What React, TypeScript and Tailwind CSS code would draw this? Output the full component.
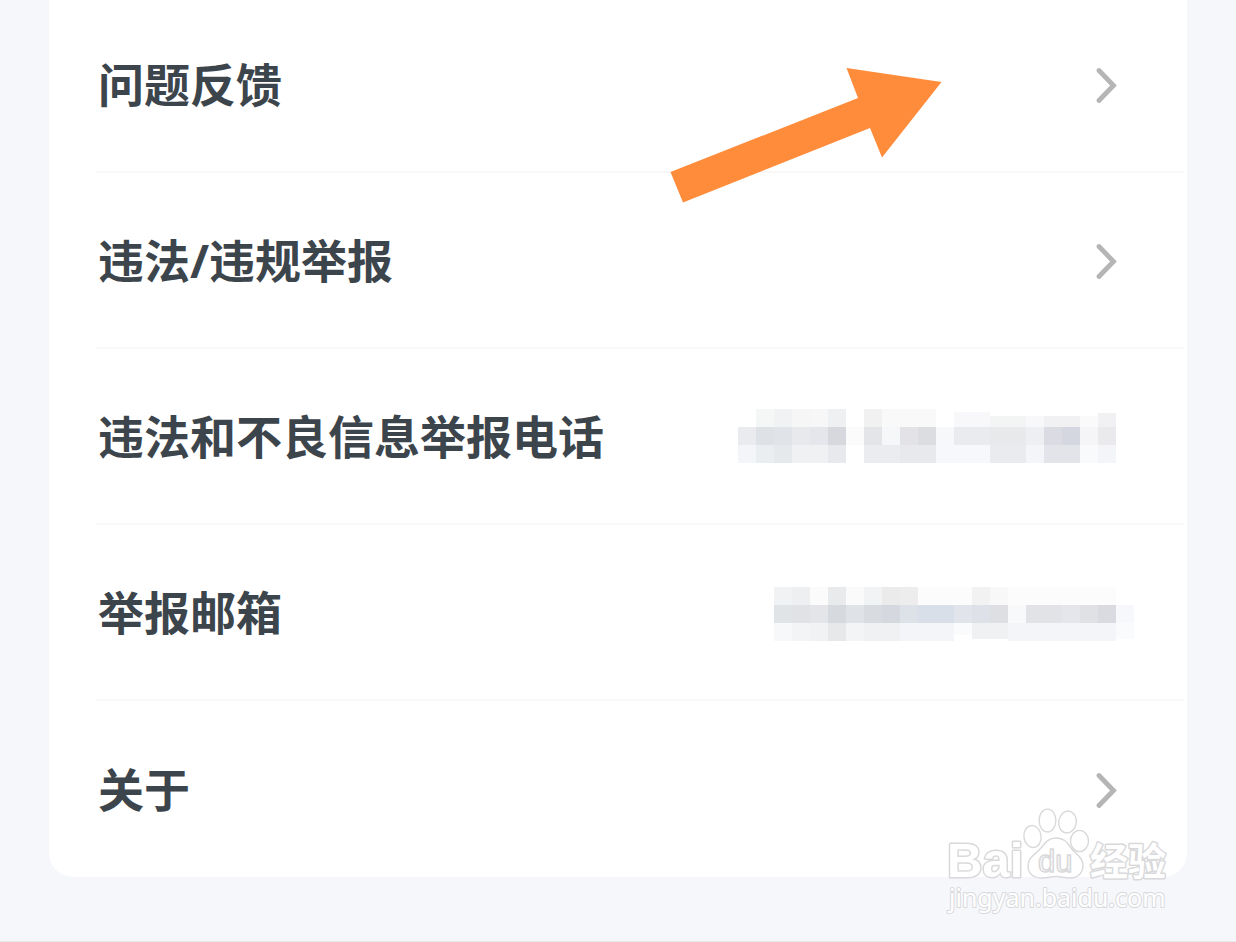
import React from 'react';

type Block = [x: number, y: number, w: number, h: number, fill: string];

const phoneBlocks: Block[] = [
  [18, 0, 18, 18, '#f5f6f6'],
  [36, 0, 18, 18, '#f1f2f3'],
  [54, 0, 18, 18, '#f6f6f7'],
  [72, 0, 18, 18, '#f7f7f8'],
  [90, 0, 18, 18, '#eff0f2'],
  [126, 0, 18, 18, '#f1f1f2'],
  [144, 0, 54, 18, '#f9f9fa'],
  [216, 3, 36, 15, '#f8f8fa'],
  [252, 7, 36, 11, '#f3f4f4'],
  [288, 7, 18, 11, '#f8f8fa'],
  [306, 7, 36, 11, '#f1f1f3'],
  [342, 7, 18, 11, '#fafafb'],
  [360, 4, 18, 14, '#f1f1f3'],
  [0, 18, 18, 18, '#eaebee'],
  [18, 18, 18, 18, '#dee2e6'],
  [36, 18, 18, 18, '#e0e3e7'],
  [54, 18, 18, 18, '#e7e9ed'],
  [72, 18, 18, 18, '#e5e6eb'],
  [90, 18, 18, 18, '#d7d8de'],
  [108, 18, 18, 18, '#fbfbfc'],
  [126, 18, 18, 18, '#e4e5e8'],
  [144, 18, 18, 18, '#f6f7f9'],
  [162, 18, 18, 18, '#e3e3e7'],
  [180, 18, 18, 18, '#dcdde1'],
  [198, 18, 18, 18, '#f7f8fa'],
  [216, 18, 36, 18, '#eaebef'],
  [252, 18, 36, 18, '#e8e9eb'],
  [288, 18, 18, 18, '#eeeff3'],
  [306, 18, 18, 18, '#dbdce3'],
  [324, 18, 18, 18, '#d5d7e0'],
  [342, 18, 18, 18, '#f5f5f7'],
  [360, 18, 18, 18, '#eaeaed'],
  [0, 36, 18, 18, '#f4f5f8'],
  [18, 36, 18, 18, '#eaeef1'],
  [36, 36, 18, 18, '#e5e9ec'],
  [54, 36, 36, 18, '#f0f1f3'],
  [90, 36, 18, 18, '#e8e9ec'],
  [126, 36, 36, 18, '#ebecef'],
  [162, 36, 36, 18, '#e8e9ed'],
  [198, 36, 54, 18, '#f7f8fb'],
  [252, 36, 36, 18, '#eaebee'],
  [288, 36, 18, 18, '#f4f5f9'],
  [306, 36, 36, 18, '#e3e4e9'],
  [342, 36, 18, 18, '#f9fafc'],
  [360, 36, 18, 18, '#f4f5f8'],
];

const emailBlocks: Block[] = [
  [0, 0, 18, 18, '#f1f2f3'],
  [18, 0, 18, 18, '#eeeff0'],
  [36, 0, 18, 18, '#fbfbfb'],
  [54, 0, 18, 18, '#e9eaeb'],
  [72, 0, 18, 18, '#fafafa'],
  [90, 0, 18, 18, '#f2f3f4'],
  [108, 0, 18, 18, '#ebebec'],
  [126, 0, 18, 18, '#ededee'],
  [144, 0, 54, 18, '#fcfcfc'],
  [198, 0, 18, 18, '#f2f2f2'],
  [216, 0, 18, 18, '#f8f8f8'],
  [234, 0, 108, 18, '#fcfcfc'],
  [0, 18, 18, 18, '#e1e4e7'],
  [18, 18, 18, 18, '#e0e2e6'],
  [36, 18, 18, 18, '#e3e5e9'],
  [54, 18, 18, 18, '#d6dade'],
  [72, 18, 18, 18, '#dfe2e6'],
  [90, 18, 18, 18, '#d8dce0'],
  [108, 18, 18, 18, '#d5d9df'],
  [126, 18, 18, 18, '#dde1e8'],
  [144, 18, 36, 18, '#d9dfe8'],
  [180, 18, 18, 18, '#e1e4eb'],
  [198, 18, 18, 18, '#dfe1e8'],
  [216, 18, 18, 18, '#dddfe2'],
  [234, 18, 18, 18, '#f8f9fa'],
  [252, 18, 36, 18, '#e2e3e6'],
  [288, 18, 18, 18, '#e4e6ec'],
  [306, 18, 18, 18, '#dfe1e5'],
  [324, 18, 18, 18, '#d9dbe0'],
  [342, 18, 18, 18, '#f7f8fb'],
  [0, 36, 18, 18, '#f7f8fa'],
  [18, 36, 18, 18, '#f3f4f6'],
  [36, 36, 18, 18, '#f1f2f3'],
  [54, 36, 18, 18, '#e6e8ea'],
  [72, 36, 18, 18, '#f3f4f6'],
  [90, 36, 36, 18, '#f0f1f3'],
  [126, 36, 54, 18, '#f4f5f8'],
  [180, 36, 18, 12, '#fafbfc'],
  [198, 36, 36, 16, '#eff1f3'],
  [234, 36, 108, 18, '#f4f5f8'],
  [342, 36, 18, 16, '#fafbfd'],
];

const Mosaic: React.FC<{ blocks: Block[]; width: number; className: string }> = ({
  blocks,
  width,
  className,
}) => (
  <svg
    width={width}
    height={54}
    viewBox={`0 0 ${width} 54`}
    shapeRendering="crispEdges"
    className={`shrink-0 ${className}`}
    aria-hidden="true"
  >
    {blocks.map(([x, y, w, h, fill]) => (
      <rect key={`${x}-${y}`} x={x} y={y} width={w} height={h} fill={fill} />
    ))}
  </svg>
);

const Chevron: React.FC = () => (
  <svg width="24" height="38" viewBox="0 0 24 38" fill="none" className="mr-16 shrink-0" aria-hidden="true">
    <path d="M3 3.500 L17.500 18.500 L3 33.500" stroke="#b5b5b5" strokeWidth="4.8" strokeLinecap="round" strokeLinejoin="miter" />
  </svg>
);

const rowClass = 'flex w-full items-center justify-between pl-[2px] text-left';

const LinkRow: React.FC<{ label: string; className: string }> = ({ label, className }) => (
  <a href="#" className={`${rowClass} ${className}`}>
    <span className="pb-1">{label}</span>
    <Chevron />
  </a>
);

const InfoRow: React.FC<{ label: string; children: React.ReactNode }> = ({ label, children }) => (
  <div className={`${rowClass} h-44 border-b-2 border-[#f7f7f8] pt-1`}>
    <span className="pb-1">{label}</span>
    {children}
  </div>
);

const Arrow: React.FC = () => (
  <svg
    width="272"
    height="136"
    viewBox="0 0 272 136"
    className="pointer-events-none absolute top-[67px] right-[294px]"
    aria-hidden="true"
  >
    <path d="M0.5 105 L188 31 L176.5 1 L271.5 15 L212 90.5 L200 61 L13 135.5 Z" fill="#ff8c3b" />
  </svg>
);

const Watermark: React.FC = () => (
  <svg
    width="232"
    height="112"
    viewBox="0 0 232 112"
    className="pointer-events-none absolute right-[60px] bottom-[26px]"
    fill="#ffffff"
    stroke="#d9d9db"
    strokeWidth="1.4"
    strokeLinejoin="round"
  >
    <text
      x="3"
      y="74"
      fontSize="49"
      fontWeight="700"
      strokeWidth="3"
      paintOrder="stroke"
      fontFamily="'Liberation Sans', sans-serif"
    >
      Bai
    </text>
    <ellipse cx="88.5" cy="33.5" rx="8.6" ry="11" transform="rotate(-8 88.5 33.5)" />
    <ellipse cx="103.5" cy="17.5" rx="8.4" ry="11.4" />
    <ellipse cx="123.5" cy="19" rx="8.8" ry="11" transform="rotate(8 123.5 19)" />
    <ellipse cx="135.5" cy="38" rx="9" ry="10.6" />
    <path d="M112 35 C104 35 101 40 97 45 C92 51 84 54 84 63 C84 71 90 75 98 75 C104 75 107 73.500 112 73.500 C117 73.500 120 75 126 75 C134 75 139 70 139 62 C139 54 131 51 127 45 C123 39 120 35 112 35 Z" />
    <text x="94" y="69" fontSize="31" strokeWidth="1.6" fontFamily="'Liberation Sans', sans-serif">
      du
    </text>
    <text
      x="146"
      y="72"
      fontSize="38"
      fontWeight="700"
      strokeWidth="3"
      paintOrder="stroke"
      fontFamily="'Noto Sans CJK SC', sans-serif"
    >
      经验
    </text>
    <text x="5" y="104" fontSize="25" strokeWidth="2" paintOrder="stroke" fontFamily="'Noto Sans', sans-serif">
      jingyan.baidu.com
    </text>
  </svg>
);

const App: React.FC = () => {
  return (
    <div
      lang="zh-CN"
      className="relative border-b-2 border-[#e6e7eb] bg-[#f5f7fb] px-[49px] pb-16 font-['Noto_Sans','Noto_Sans_CJK_SC',sans-serif]"
    >
      <main className="rounded-b-3xl bg-white pr-[3px] pl-[47px] text-[46px] leading-[64px] font-bold text-[#3d454c]">
        <LinkRow label="问题反馈" className="h-[173px] border-b-2 border-[#f7f7f8]" />
        <LinkRow label="违法/违规举报" className="h-44 border-b-2 border-[#f7f7f8] pt-1" />
        <InfoRow label="违法和不良信息举报电话">
          <Mosaic blocks={phoneBlocks} width={378} className="mr-[68px] mb-1" />
        </InfoRow>
        <InfoRow label="举报邮箱">
          <Mosaic blocks={emailBlocks} width={360} className="mr-[50px]" />
        </InfoRow>
        <LinkRow label="关于" className="h-44 pt-1" />
      </main>
      <Arrow />
      <Watermark />
    </div>
  );
};

export default App;
